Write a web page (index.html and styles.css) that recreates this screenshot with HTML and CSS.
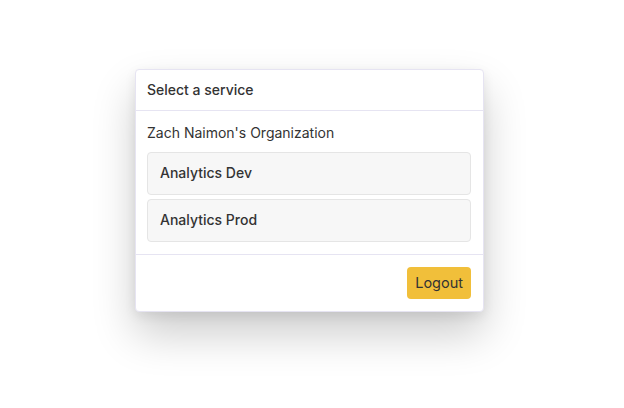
FILE: index.html
```html
<!DOCTYPE html>
<html>
<head>
<meta charset="utf-8">
<link rel="stylesheet" href="styles.css">
</head>
<body>
<div class="page">
  <div class="card">
    <div class="card-header">Select a service</div>
    <div class="card-body">
      <div class="org">Zach Naimon's Organization</div>
      <div class="list">
        <div class="item">Analytics Dev</div>
        <div class="item">Analytics Prod</div>
      </div>
    </div>
    <div class="card-footer">
      <button class="btn">Logout</button>
    </div>
  </div>
</div>
</body>
</html>
```

FILE: styles.css
```css
html, body {
  margin: 0;
  padding: 0;
  background: #ffffff;
  font-family: Inter, "Noto Sans", sans-serif;
  color: #333333;
}
.page {
  width: 624px;
  height: 408px;
  padding-top: 69px;
  padding-left: 135px;
  box-sizing: border-box;
}
.card {
  width: 349px;
  box-sizing: border-box;
  background: #fff;
  border: 1px solid #e6e4f2;
  border-radius: 4px;
  box-shadow: 0 22px 44px rgba(0, 0, 0, 0.2), 0 4px 12px rgba(0,0,0,0.08);
}
.card-header {
  padding: 11px 11px;
  font-size: 14px;
  font-weight: 500;
  line-height: 18px;
  border-bottom: 1px solid #e6e4f2;
}
.card-body {
  padding: 12px 12px 12px 11px;
}
.org {
  font-size: 14px;
  line-height: 18px;
  margin-top: 1px;
  margin-bottom: 10px;
}
.list {
  display: flex;
  flex-direction: column;
  gap: 4px;
}
.item {
  background: #f7f7f7;
  border: 1px solid #e5e5e5;
  border-radius: 4px;
  padding: 11px 12px 12px;
  font-size: 14px;
  font-weight: 500;
  line-height: 18px;
}
.card-footer {
  border-top: 1px solid #e6e4f2;
  padding: 12px 12px 12px;
  display: flex;
  justify-content: flex-end;
}
.btn {
  background: #f1bf3a;
  border: none;
  border-radius: 4px;
  color: #333;
  font-family: Inter, "Noto Sans", sans-serif;
  font-size: 14.5px;
  line-height: 20px;
  padding: 6px 8px;
  height: 32px;
  cursor: pointer;
}
```
